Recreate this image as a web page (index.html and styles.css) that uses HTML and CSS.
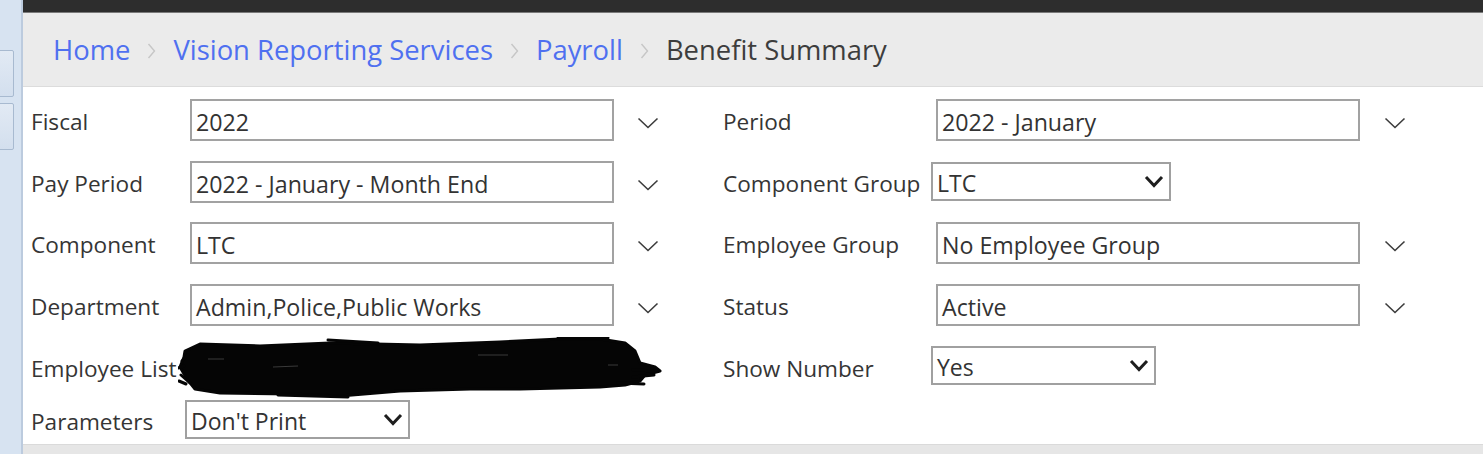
FILE: index.html
```html
<!DOCTYPE html>
<html lang="en">
<head>
<meta charset="utf-8">
<title>Benefit Summary</title>
<link rel="stylesheet" href="styles.css">
</head>
<body>
<div class="page">
  <aside class="sidebar">
    <div class="side-btn"></div>
    <div class="side-btn"></div>
  </aside>
  <main class="main">
    <div class="topbar"></div>
    <nav class="crumbs">
      <a class="crumb link">Home</a>
      <svg class="sep" width="9" height="18" viewBox="0 0 9 18"><path d="M1.5 2 L7.5 9 L1.5 16" fill="none" stroke="#c6c6c6" stroke-width="1.4"/></svg>
      <a class="crumb link">Vision Reporting Services</a>
      <svg class="sep" width="9" height="18" viewBox="0 0 9 18"><path d="M1.5 2 L7.5 9 L1.5 16" fill="none" stroke="#c6c6c6" stroke-width="1.4"/></svg>
      <a class="crumb link">Payroll</a>
      <svg class="sep" width="9" height="18" viewBox="0 0 9 18"><path d="M1.5 2 L7.5 9 L1.5 16" fill="none" stroke="#c6c6c6" stroke-width="1.4"/></svg>
      <span class="crumb current">Benefit Summary</span>
    </nav>
    <section class="form">
      <!-- row 1 -->
      <div class="label">Fiscal</div>
      <div class="field">2022</div>
      <div class="chev-cell"><svg class="chev" width="22" height="12" viewBox="0 0 22 12"><path d="M1.5 1.5 L11 10.5 L20.5 1.5" fill="none" stroke="#3c3c3c" stroke-width="1.6"/></svg></div>
      <div class="label">Period</div>
      <div class="field">2022 - January</div>
      <div class="chev-cell right"><svg class="chev" width="22" height="12" viewBox="0 0 22 12"><path d="M1.5 1.5 L11 10.5 L20.5 1.5" fill="none" stroke="#3c3c3c" stroke-width="1.6"/></svg></div>

      <!-- row 2 -->
      <div class="label">Pay Period</div>
      <div class="field">2022 - January - Month End</div>
      <div class="chev-cell"><svg class="chev" width="22" height="12" viewBox="0 0 22 12"><path d="M1.5 1.5 L11 10.5 L20.5 1.5" fill="none" stroke="#3c3c3c" stroke-width="1.6"/></svg></div>
      <div class="label">Component Group</div>
      <div class="select wide"><span>LTC</span><svg width="20" height="13" viewBox="0 0 20 13"><path d="M2 2 L10 10.5 L18 2" fill="none" stroke="#1e1e1e" stroke-width="3"/></svg></div>
      <div class="chev-cell right"></div>

      <!-- row 3 -->
      <div class="label">Component</div>
      <div class="field">LTC</div>
      <div class="chev-cell"><svg class="chev" width="22" height="12" viewBox="0 0 22 12"><path d="M1.5 1.5 L11 10.5 L20.5 1.5" fill="none" stroke="#3c3c3c" stroke-width="1.6"/></svg></div>
      <div class="label">Employee Group</div>
      <div class="field">No Employee Group</div>
      <div class="chev-cell right"><svg class="chev" width="22" height="12" viewBox="0 0 22 12"><path d="M1.5 1.5 L11 10.5 L20.5 1.5" fill="none" stroke="#3c3c3c" stroke-width="1.6"/></svg></div>

      <!-- row 4 -->
      <div class="label">Department</div>
      <div class="field">Admin,Police,Public Works</div>
      <div class="chev-cell"><svg class="chev" width="22" height="12" viewBox="0 0 22 12"><path d="M1.5 1.5 L11 10.5 L20.5 1.5" fill="none" stroke="#3c3c3c" stroke-width="1.6"/></svg></div>
      <div class="label">Status</div>
      <div class="field">Active</div>
      <div class="chev-cell right"><svg class="chev" width="22" height="12" viewBox="0 0 22 12"><path d="M1.5 1.5 L11 10.5 L20.5 1.5" fill="none" stroke="#3c3c3c" stroke-width="1.6"/></svg></div>

      <!-- row 5 -->
      <div class="label">Employee List</div>
      <div class="redacted">
        <svg width="490" height="62" viewBox="0 0 490 62">
          <path d="M7 14 L22 7 L82 9 L152 6 L242 8 L322 5 L382 2 L422 2 L447 6 L457 14 L462 26 L477 30 L482 34 L467 38 L462 44 L447 48 L422 50 L342 52 L292 52 L222 54 L162 59 L112 57 L42 56 L17 52 L9 42 L2 30 L6 20 Z" fill="#050505" stroke="#050505" stroke-width="3" stroke-linejoin="round"/>
          <path d="M4 24 L10 18 M3 38 L12 46 M150 3 L200 6 M380 0 L430 1 M455 33 L480 34 M455 40 L476 38 M440 46 L466 47 M100 58 L170 60 M0 31 L6 29 M1 44 L8 47" fill="none" stroke="#050505" stroke-width="3" stroke-linecap="round"/>
          <path d="M30 22 L46 22 M95 30 L120 29 M300 18 L330 18 M430 28 L440 28" fill="none" stroke="#3a3a3a" stroke-width="1.2"/>
        </svg>
      </div>
      <div class="label">Show Number</div>
      <div class="select"><span>Yes</span><svg width="20" height="13" viewBox="0 0 20 13"><path d="M2 2 L10 10.5 L18 2" fill="none" stroke="#1e1e1e" stroke-width="3"/></svg></div>
      <div class="chev-cell right"></div>

      <!-- row 6 -->
      <div class="label short">Parameters</div>
      <div class="select"><span>Don't Print</span><svg width="20" height="13" viewBox="0 0 20 13"><path d="M2 2 L10 10.5 L18 2" fill="none" stroke="#1e1e1e" stroke-width="3"/></svg></div>
      <div class="chev-cell"></div>
      <div class="label"></div>
      <div></div>
      <div></div>
    </section>
    <div class="footer-band"></div>
  </main>
</div>
</body>
</html>
```

FILE: styles.css
```css
html, body {
  margin: 0;
  padding: 0;
  background: #ffffff;
}

body {
  font-family: "Open Sans", "Noto Sans", sans-serif;
  color: #333333;
  overflow: hidden;
}

.page {
  display: flex;
  height: 454px;
  width: 1483px;
}

.sidebar {
  width: 21px;
  flex: 0 0 21px;
  background: #d7e3f1;
  border-right: 2px solid #bccbde;
  display: flex;
  flex-direction: column;
  gap: 6px;
  padding-top: 50px;
  box-sizing: content-box;
}

.side-btn {
  width: 16px;
  height: 47px;
  margin-left: -2px;
  border: 1px solid #a8bad0;
  border-radius: 2px;
  background: linear-gradient(#e2eaf4, #d3dfee);
  box-sizing: border-box;
}

.main {
  flex: 1;
  display: flex;
  flex-direction: column;
  min-width: 0;
}

.topbar {
  height: 12px;
  background: #2d2d2d;
  border-bottom: 1px solid #7a7a7a;
}

.crumbs {
  height: 73px;
  background: #ebebeb;
  border-bottom: 1px solid #dcdcdc;
  display: flex;
  align-items: center;
  gap: 17px;
  padding-left: 30px;
  font-size: 27.4px;
}

.crumb {
  line-height: 1;
  padding-top: 1px;
}

.link {
  color: #4f70f0;
  text-decoration: none;
}

.current {
  color: #3d3d3d;
}

.sep {
  display: block;
  margin-top: 3px;
}

.form {
  flex: 1;
  display: grid;
  grid-template-columns: 159px 424px 109px 213px 424px 1fr;
  grid-template-rows: 62px 61px 62px 62px 54px 39px;
  align-items: start;
  padding: 12px 0 0 8px;
  font-size: 22.6px;
}

.label {
  height: 42px;
  display: flex;
  align-items: center;
  padding-top: 3px;
  box-sizing: border-box;
  color: #353535;
  white-space: nowrap;
}

.label.short {
  height: 39px;
}

.field {
  height: 42px;
  border: 2px solid #a2a2a2;
  box-sizing: border-box;
  display: flex;
  align-items: center;
  padding: 3px 0 0 4px;
  color: #333333;
  white-space: nowrap;
  overflow: hidden;
  font-size: 23.2px;
}

.chev-cell {
  height: 42px;
  display: flex;
  align-items: center;
  padding: 5px 0 0 23px;
  box-sizing: border-box;
}

.chev-cell.right {
  padding-left: 24px;
}

.select {
  height: 39px;
  width: 225px;
  margin-left: -5px;
  border: 2px solid #a0a0a0;
  box-sizing: border-box;
  display: flex;
  align-items: center;
  justify-content: space-between;
  padding: 3px 5px 0 4px;
  color: #333333;
  white-space: nowrap;
  font-size: 23px;
}

.select.wide {
  width: 240px;
  margin-top: 1px;
}

.select svg {
  margin-top: -4px;
  flex: 0 0 auto;
}

.redacted {
  grid-column: 2 / span 2;
  margin: -9px 0 0 -12px;
  height: 62px;
}

.redacted svg {
  display: block;
}

.footer-band {
  height: 9px;
  background: #e6e6e6;
  border-top: 1px solid #dadada;
}
```
